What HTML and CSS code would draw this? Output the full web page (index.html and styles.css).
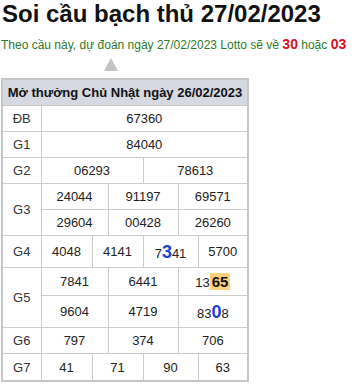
FILE: index.html
```html
<!DOCTYPE html>
<html>
<head>
    <title>Soi cầu bạch thủ</title>
    <link rel="stylesheet" href="styles.css">
</head>
<body>
    <h1 class="title">Soi cầu bạch thủ 27/02/2023</h1>
    <p class="summary">Theo cầu này, dự đoán ngày 27/02/2023 Lotto sẽ về <b class="hit">30</b> hoặc <b class="hit">03</b></p>
    <div class="arrow"></div>

    <table class="result">
        <colgroup>
            <col style="width:39px">
            <col style="width:51px">
            <col style="width:16px">
            <col style="width:35px">
            <col style="width:35px">
            <col style="width:20px">
            <col style="width:50px">
        </colgroup>
        <thead>
            <tr>
                <th colspan="7">Mở thưởng Chủ Nhật ngày 26/02/2023</th>
            </tr>
        </thead>
        <tbody>
            <tr>
                <td class="label">ĐB</td>
                <td colspan="6">67360</td>
            </tr>
            <tr>
                <td class="label">G1</td>
                <td colspan="6">84040</td>
            </tr>
            <tr>
                <td class="label">G2</td>
                <td colspan="3">06293</td>
                <td colspan="3">78613</td>
            </tr>
            <tr>
                <td class="label" rowspan="2">G3</td>
                <td colspan="2">24044</td>
                <td colspan="2">91197</td>
                <td colspan="2">69571</td>
            </tr>
            <tr>
                <td colspan="2">29604</td>
                <td colspan="2">00428</td>
                <td colspan="2">26260</td>
            </tr>
            <tr class="tall">
                <td class="label">G4</td>
                <td>4048</td>
                <td colspan="2">4141</td>
                <td colspan="2">7<span class="pos">3</span>41</td>
                <td>5700</td>
            </tr>
            <tr class="mid">
                <td class="label" rowspan="2">G5</td>
                <td colspan="2">7841</td>
                <td colspan="2">6441</td>
                <td colspan="2">13<span class="pair">65</span></td>
            </tr>
            <tr class="tall">
                <td colspan="2">9604</td>
                <td colspan="2">4719</td>
                <td colspan="2">83<span class="pos">0</span>8</td>
            </tr>
            <tr>
                <td class="label">G6</td>
                <td colspan="2">797</td>
                <td colspan="2">374</td>
                <td colspan="2">706</td>
            </tr>
            <tr class="last">
                <td class="label">G7</td>
                <td>41</td>
                <td colspan="2">71</td>
                <td colspan="2">90</td>
                <td>63</td>
            </tr>
        </tbody>
    </table>
</body>
</html>
```

FILE: styles.css
```css
body {
    font-family: 'Liberation Sans', Arial, sans-serif;
    margin: 0;
    padding: 0 1px;
    color: #222;
    background: #fff;
}

.title {
    font-size: 24px;
    line-height: 28px;
    margin: 0 0 0 1px;
    color: #111;
}

.summary {
    font-size: 12px;
    line-height: 18px;
    margin: 7px 0 0;
    color: #2b7a2b;
}

.hit {
    font-size: 14px;
    color: #d4111a;
}

/* little pointer above the table */
.arrow {
    width: 0;
    height: 0;
    margin: 4px 0 0 103px;
    border-left: 7px solid transparent;
    border-right: 7px solid transparent;
    border-bottom: 13px solid #c3c3c3;
}

.result {
    margin-top: 7px;
    width: 246px;
    table-layout: fixed;
    border-collapse: collapse;
    border: 2px solid #c6c6c6;
    font-size: 13px;
}

.result th {
    background: #d6d9e1;
    font-weight: bold;
    height: 25px;
    padding: 0;
    text-align: center;
    color: #111;
    border: 1px solid #c6c6c6;
}

.result td {
    height: 25px;
    padding: 0;
    text-align: center;
    border: 1px solid #cccccc;
    white-space: nowrap;
}

.result td.label {
    color: #333;
}

.result tr.tall td {
    height: 31px;
}

.result tr.mid td {
    height: 27px;
}

.result tr.last td {
    height: 26px;
}

.pos {
    font-size: 18px;
    font-weight: bold;
    color: #1f3fd2;
    line-height: 18px;
}

.pair {
    display: inline-block;
    font-size: 15px;
    font-weight: bold;
    line-height: 17px;
    padding: 0 2px;
    background: #fdd27d;
    color: #111;
}
```
